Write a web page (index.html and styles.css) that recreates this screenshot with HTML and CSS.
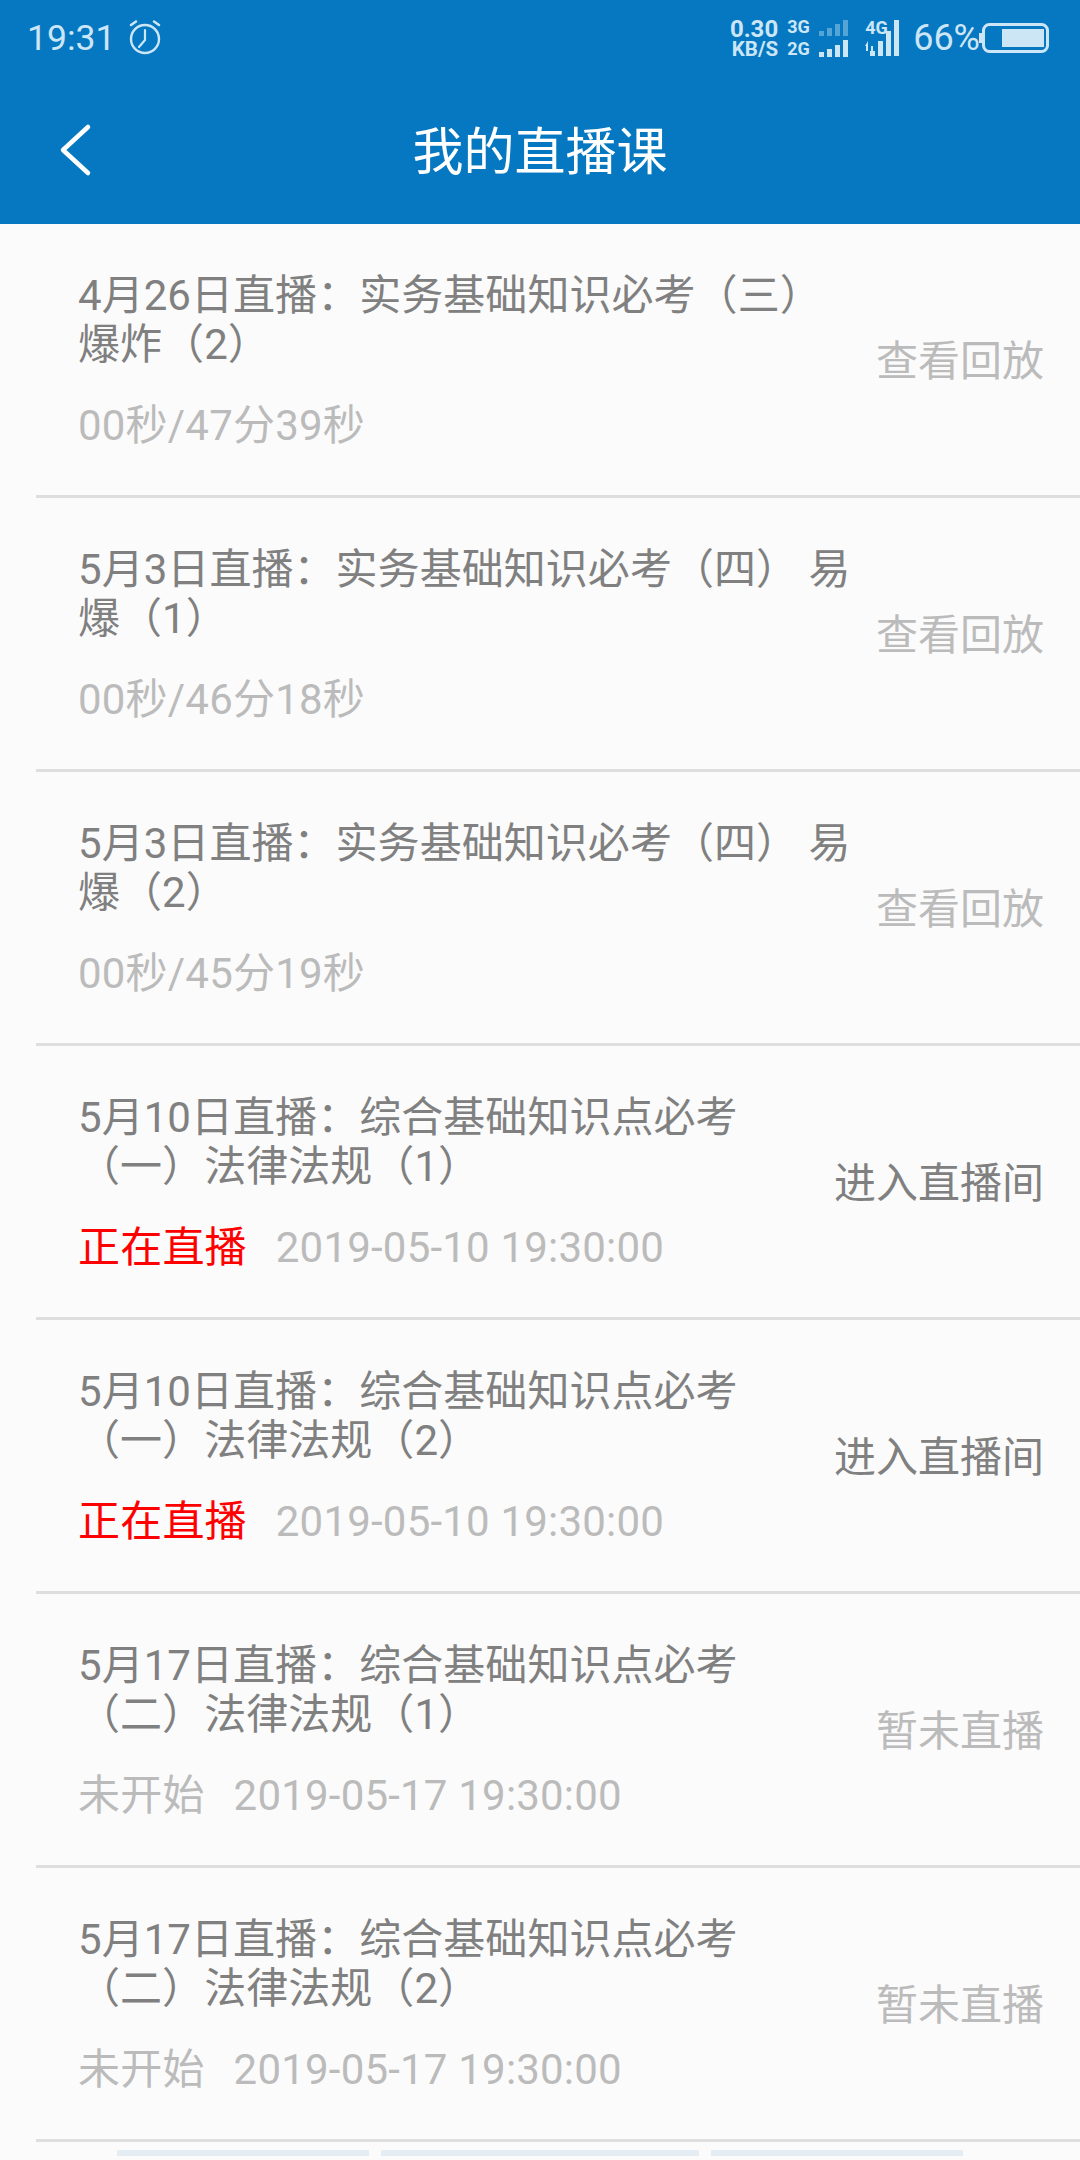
FILE: index.html
```html
<!DOCTYPE html>
<html lang="zh">
<head>
  <meta charset="UTF-8">
  <meta name="viewport" content="width=device-width, initial-scale=1.0">
  <title>我的直播课</title>
  <link rel="stylesheet" href="styles.css">
</head>
<body>
  <header class="top">
    <!-- 状态栏 -->
    <div class="status-bar">
      <div class="status-left">
        <span class="clock">19:31</span>
        <svg class="alarm" width="36" height="36" viewBox="0 0 36 36" fill="none" stroke="currentColor" stroke-linecap="round">
          <circle cx="18" cy="20" r="14" stroke-width="2.4"/>
          <path d="M18 11v10l-6 7" stroke-width="2.2" stroke-linejoin="round"/>
          <path d="M4 6l5-3.500M32 6l-5-3.500" stroke-width="2.600"/>
        </svg>
      </div>
      <div class="status-right">
        <div class="net-speed"><span>0.30</span><span>KB/S</span></div>
        <div class="net-type"><span>3G</span><span>2G</span></div>
        <svg class="signal-sim" width="30" height="37" viewBox="0 0 30 37" fill="currentColor">
          <g opacity="0.4">
            <rect x="0" y="11" width="5" height="5"/><rect x="8" y="8" width="5" height="8"/>
            <rect x="16" y="4" width="5" height="12"/><rect x="24" y="0" width="5" height="16"/>
          </g>
          <rect x="0" y="32" width="5" height="5"/><rect x="8" y="29" width="5" height="8"/>
          <rect x="16" y="25" width="5" height="12"/><rect x="24" y="20" width="5" height="17"/>
        </svg>
        <div class="net-main">
          <span>4G</span>
          <svg width="9" height="15" viewBox="0 0 9 15" fill="currentColor">
            <path d="M3 0v5H0zM1 5h2v5H1zM6 15V10h3zM6 5h2v5H6z"/>
          </svg>
        </div>
        <svg class="signal-main" width="30" height="36" viewBox="0 0 30 36" fill="currentColor">
          <rect x="0" y="31" width="5" height="5"/><rect x="8" y="21" width="5" height="15"/>
          <rect x="16" y="11" width="5" height="25"/><rect x="24" y="0" width="5" height="36"/>
        </svg>
        <span class="battery-num">66%</span>
        <svg class="battery" width="70" height="30" viewBox="0 0 70 30">
          <rect x="0" y="10" width="3" height="10" fill="currentColor"/>
          <rect x="4.500" y="1.500" width="64" height="27" rx="6" fill="none" stroke="currentColor" stroke-width="3"/>
          <rect x="23" y="6" width="42" height="18" fill="currentColor"/>
        </svg>
      </div>
    </div>
    <!-- 标题栏 -->
    <div class="nav-bar">
      <svg class="back" width="34" height="54" viewBox="0 0 34 54" fill="none" stroke="#fff" stroke-width="4.500" stroke-linecap="round" stroke-linejoin="round">
        <path d="M29 4L4 27l25 23"/>
      </svg>
      <h1>我的直播课</h1>
    </div>
  </header>

  <main>
    <div class="row">
      <div class="info">
        <p class="name">4月26日直播：实务基础知识必考（三）<br>爆炸（2）</p>
        <p class="meta">00秒/47分39秒</p>
      </div>
      <span class="action">查看回放</span>
    </div>
    <div class="row">
      <div class="info">
        <p class="name">5月3日直播：实务基础知识必考（四） 易<br>爆（1）</p>
        <p class="meta">00秒/46分18秒</p>
      </div>
      <span class="action">查看回放</span>
    </div>
    <div class="row">
      <div class="info">
        <p class="name">5月3日直播：实务基础知识必考（四） 易<br>爆（2）</p>
        <p class="meta">00秒/45分19秒</p>
      </div>
      <span class="action">查看回放</span>
    </div>
    <div class="row">
      <div class="info">
        <p class="name">5月10日直播：综合基础知识点必考<br>（一）法律法规（1）</p>
        <p class="meta"><span class="state live">正在直播</span>2019-05-10 19:30:00</p>
      </div>
      <span class="action active">进入直播间</span>
    </div>
    <div class="row">
      <div class="info">
        <p class="name">5月10日直播：综合基础知识点必考<br>（一）法律法规（2）</p>
        <p class="meta"><span class="state live">正在直播</span>2019-05-10 19:30:00</p>
      </div>
      <span class="action active">进入直播间</span>
    </div>
    <div class="row">
      <div class="info">
        <p class="name">5月17日直播：综合基础知识点必考<br>（二）法律法规（1）</p>
        <p class="meta"><span class="state">未开始</span>2019-05-17 19:30:00</p>
      </div>
      <span class="action">暂未直播</span>
    </div>
    <div class="row">
      <div class="info">
        <p class="name">5月17日直播：综合基础知识点必考<br>（二）法律法规（2）</p>
        <p class="meta"><span class="state">未开始</span>2019-05-17 19:30:00</p>
      </div>
      <span class="action">暂未直播</span>
    </div>
    <!-- 下一条被截断，只露出一点 -->
    <div class="next-peek">
      <i class="peek-a"></i><i class="peek-b"></i><i class="peek-c"></i>
    </div>
  </main>
</body>
</html>
```

FILE: styles.css
```css
html, body {
  margin: 0;
  height: 2160px;
  overflow: hidden;
}
body {
  font-family: Roboto, 'Noto Sans CJK SC', sans-serif;
  background-color: #fbfbfb;
  color: #808080;
}
p, h1 {
  margin: 0;
  font-weight: normal;
}

/* 顶部 */
.top {
  background-color: #0578c1;
  height: 224px;
}
.status-bar {
  box-sizing: border-box;
  height: 72px;
  display: flex;
  justify-content: space-between;
  align-items: center;
  color: #cde6f6;
  padding: 4px 31px 0 27px;
}
.status-left {
  display: flex;
  align-items: center;
  gap: 12px;
}
.clock {
  font-size: 35.500px;
}
.alarm {
  margin-top: -2px;
}
.status-right {
  display: flex;
  align-items: center;
}
.net-speed {
  display: flex;
  flex-direction: column;
  align-items: flex-end;
  font-weight: bold;
  margin-top: 2px;
  margin-right: 9px;
}
.net-speed span:first-child {
  font-size: 24px;
  line-height: 20px;
}
.net-speed span:last-child {
  font-size: 20.500px;
  line-height: 20px;
}
.net-type {
  display: flex;
  flex-direction: column;
  gap: 4px;
  font-size: 18px;
  line-height: 18px;
  font-weight: bold;
  width: 22px;
  margin-right: 10px;
}
.signal-sim {
  margin-right: 16px;
}
.net-main {
  display: flex;
  flex-direction: column;
  gap: 7px;
  font-size: 18px;
  line-height: 13px;
  font-weight: bold;
  width: 22px;
}
.signal-main {
  margin-left: -17px;
  margin-right: 13px;
}
.battery-num {
  font-size: 36px;
}
.battery {
  margin-left: -1px;
}
.nav-bar {
  height: 152px;
  display: grid;
  grid-template-columns: 1fr auto 1fr;
  align-items: center;
}
.back {
  margin-left: 59px;
  margin-top: 4px;
}
.nav-bar h1 {
  grid-column: 2;
  color: #fff;
  font-size: 51px;
}

/* 列表 */
.row {
  height: 271px;
  margin-left: 36px;
  padding: 0 36px 0 42px;
  border-bottom: 3px solid #dedede;
  display: flex;
  justify-content: space-between;
  align-items: center;
}
.name {
  font-size: 42px;
  line-height: 48.500px;
  letter-spacing: 0.05px;
  white-space: nowrap;
  margin-top: 4px;
}
.meta {
  font-size: 42px;
  line-height: 50px;
  letter-spacing: 0.2px;
  margin-top: 32px;
  color: #bbb;
  white-space: nowrap;
}
.state {
  margin-right: 29px;
}
.live {
  color: #f00;
}
.action {
  font-size: 42px;
  color: #bbb;
  white-space: nowrap;
  margin-bottom: 5px;
}
.active {
  color: #808080;
}
.next-peek {
  display: flex;
  gap: 12px;
  margin: 8px 0 0 117px;
}
.next-peek i {
  height: 6px;
  background: #e3edf3;
}
.peek-a, .peek-c {
  width: 252px;
}
.peek-b {
  width: 318px;
}
```
